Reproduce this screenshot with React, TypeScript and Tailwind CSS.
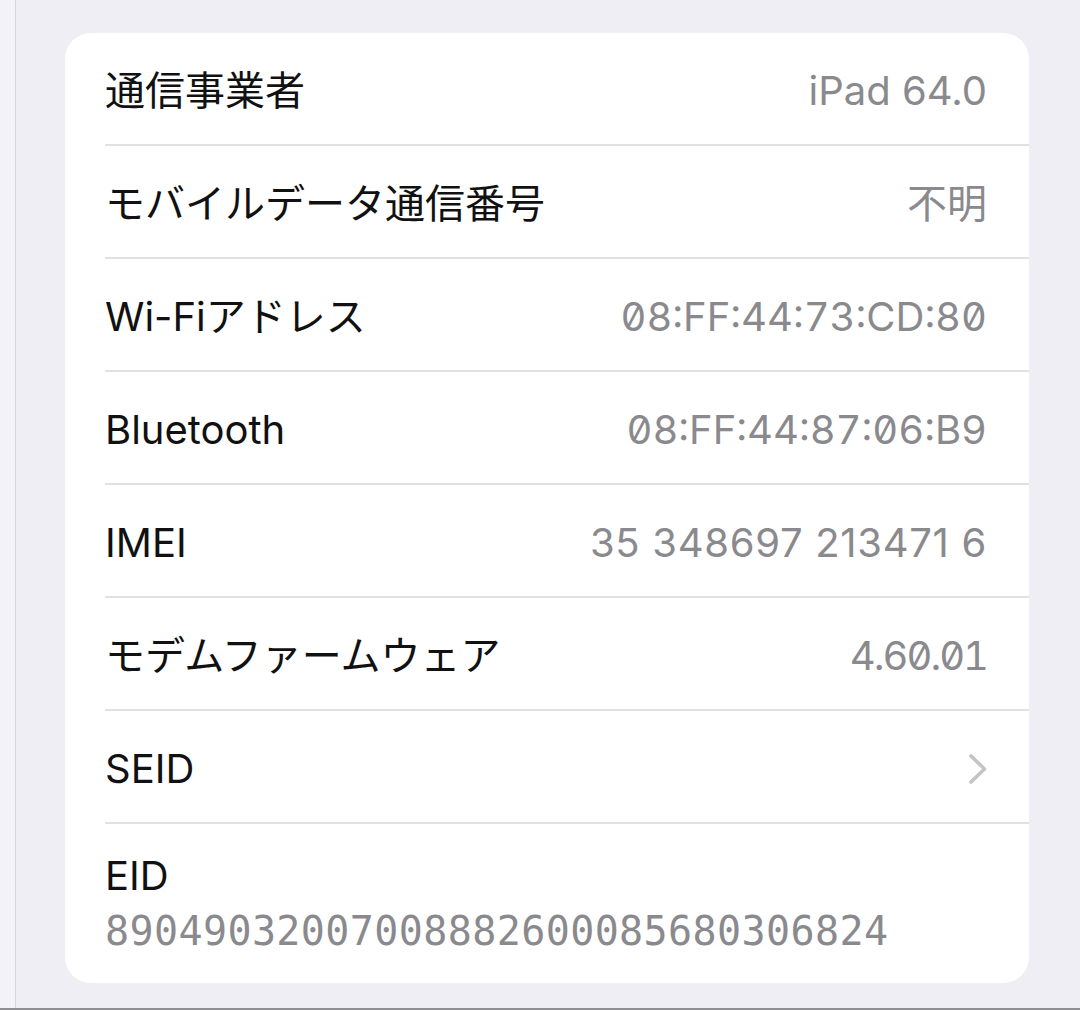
import React from "react";

const rows: { label: string; value?: string; cls?: string; chevron?: boolean }[] = [
  { label: "通信事業者", value: "iPad 64.0", cls: "" },
  { label: "モバイルデータ通信番号", value: "不明", cls: "" },
  { label: "Wi-Fiアドレス", value: "08:FF:44:73:CD:80", cls: "tabular-nums slashed-zero tracking-[0px]" },
  { label: "Bluetooth", value: "08:FF:44:87:06:B9", cls: "tabular-nums slashed-zero tracking-[0px]" },
  { label: "IMEI", value: "35 348697 213471 6", cls: "tracking-[0.7px]" },
  { label: "モデムファームウェア", value: "4.60.01", cls: "tabular-nums slashed-zero tracking-[-2px]" },
  { label: "SEID", chevron: true },
];

export default function App() {
  return (
    <div
      className="w-[1080px] h-[1010px] bg-[#efeef5] flex flex-col overflow-hidden"
      style={{ fontFamily: "Inter, 'Noto Sans CJK JP', sans-serif" }}
    >
      <div className="flex flex-1 min-h-0">
        <div className="w-[15px] bg-[#f3f2f8]" />
        <div className="w-px bg-[#d6d5dd]" />
        <div className="flex-1 pt-[33px] pl-[49px]">
          <div className="w-[964px] bg-white rounded-[26px] pl-[40px]">
            {rows.map((r) => (
              <div
                key={r.label}
                className="h-[113px] pt-[5px] flex items-center justify-between pr-[42px] border-b-2 border-[#e1e1e5]"
              >
                <span className="text-[40px] leading-[48px] text-[#111111]">{r.label}</span>
                {r.value && (
                  <span className={`text-[40px] leading-[48px] text-[#8a8a8e] ${r.cls ?? ""}`}>
                    {r.value}
                  </span>
                )}
                {r.chevron && (
                  <svg width="20" height="32" viewBox="0 0 20 32" className="mr-[-1px]">
                    <polyline
                      points="3,3 16.5,16 3,29"
                      fill="none"
                      stroke="#c4c4c7"
                      strokeWidth="3.6"
                      strokeLinecap="round"
                      strokeLinejoin="round"
                    />
                  </svg>
                )}
              </div>
            ))}
            <div className="flex flex-col pt-[28px] pb-[28px]">
              <span className="text-[40px] leading-[48px] text-[#111111]">EID</span>
              <span
                className="mt-[7px] text-[40px] leading-[48px] text-[#8a8a8e] tracking-[0.4px]"
                style={{ fontFamily: "'DejaVu Sans Mono', monospace" }}
              >
                89049032007008882600085680306824
              </span>
            </div>
          </div>
        </div>
      </div>
      <div className="h-[2px] bg-[#8e8e93]" />
    </div>
  );
}
